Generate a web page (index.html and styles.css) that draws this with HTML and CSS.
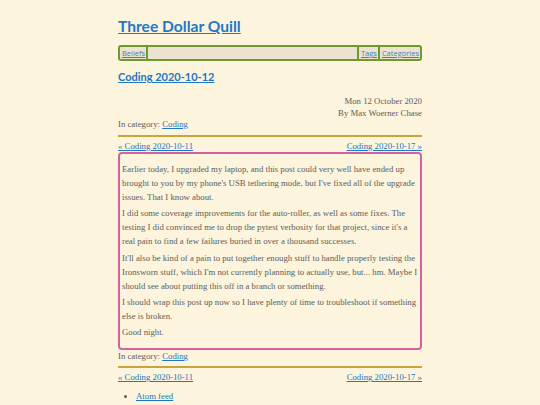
FILE: index.html
```html
<!DOCTYPE html>
<html lang="en">
<head>
<meta charset="utf-8">
<title>Coding 2020-10-12 - Three Dollar Quill</title>
<link rel="stylesheet" href="styles.css">
</head>
<body>
<div class="page">
  <header class="site-header">
    <h1 class="site-title"><a href="#">Three Dollar Quill</a></h1>
    <nav class="menu">
      <a href="#">Beliefs</a><span class="sep"></span>
      <span class="spacer"></span>
      <span class="sep"></span><a href="#">Tags</a><span class="sep"></span><a href="#">Categories</a>
    </nav>
  </header>

  <article class="post">
    <h2 class="post-title"><a href="#">Coding 2020-10-12</a></h2>
    <div class="meta">
      <div class="date">Mon 12 October 2020</div>
      <div class="author">By Max Woerner Chase</div>
    </div>
    <div class="category">In category: <a href="#">Coding</a></div>
    <div class="pager">
      <a href="#">« Coding 2020-10-11</a>
      <a href="#">Coding 2020-10-17 »</a>
    </div>
    <div class="content">
      <p>Earlier today, I upgraded my laptop, and this post could very well have ended up brought to you by my phone's USB tethering mode, but I've fixed all of the upgrade issues. That I know about.</p>
      <p>I did some coverage improvements for the auto-roller, as well as some fixes. The testing I did convinced me to drop the pytest verbosity for that project, since it's a real pain to find a few failures buried in over a thousand successes.</p>
      <p>It'll also be kind of a pain to put together enough stuff to handle properly testing the Ironsworn stuff, which I'm not currently planning to actually use, but... hm. Maybe I should see about putting this off in a branch or something.</p>
      <p>I should wrap this post up now so I have plenty of time to troubleshoot if something else is broken.</p>
      <p>Good night.</p>
    </div>
    <div class="category after">In category: <a href="#">Coding</a></div>
    <div class="pager bottom">
      <a href="#">« Coding 2020-10-11</a>
      <a href="#">Coding 2020-10-17 »</a>
    </div>
  </article>

  <footer class="site-footer">
    <ul>
      <li><a href="#">Atom feed</a></li>
    </ul>
  </footer>
</div>
</body>
</html>
```
FILE: styles.css
```css
html, body {
  margin: 0;
  padding: 0;
  background: #fcf4dc;
}

body {
  font-family: "Liberation Serif", serif;
  font-size: 8.75px;
  color: #5e5e5a;
}

a {
  color: #2277c4;
  text-decoration: underline;
}

.page {
  width: 304px;
  margin: 0 auto;
  padding-top: 14px;
}

.site-title {
  margin: 0;
  font-family: "Lato", sans-serif;
  font-weight: 700;
  font-size: 15.6px;
  line-height: 24px;
}

.site-title a {
  color: #1f78c8;
}

.menu {
  margin-top: 7px;
  display: flex;
  align-items: stretch;
  height: 12px;
  border: 2px solid #6c9a2c;
  border-radius: 3px;
  background: #ebe3cf;
  font-family: "Open Sans", sans-serif;
  font-size: 7.5px;
  line-height: 12px;
}

.menu a {
  padding: 0 1px 0 2px;
  color: #3d7fbf;
}

.sep {
  width: 2px;
  background: #6c9a2c;
}

.spacer {
  flex: 1;
}

.post-title {
  margin: 6px 0 0;
  font-family: "Lato", sans-serif;
  font-weight: 700;
  font-size: 11px;
  line-height: 20px;
}

.meta {
  margin-top: 8px;
  text-align: right;
  line-height: 13px;
}

.meta .author {
  line-height: 11px;
}

.category {
  line-height: 11px;
}

.pager {
  display: flex;
  justify-content: space-between;
  margin-top: 5px;
  padding-top: 4px;
  border-top: 2px solid #c8a43a;
  line-height: 10px;
}

.content {
  margin-top: 1px;
  border: 2px solid #d4629e;
  border-radius: 4px;
  padding: 8px 2px 6.5px;
  line-height: 14px;
}

.content p {
  margin: 0 0 2.25px;
}

.category.after {
  margin-top: 1.5px;
}

.pager.bottom {
  margin-top: 4px;
}

.site-footer ul {
  margin: 8px 0 0;
  padding-left: 18px;
  line-height: 12px;
}
```
